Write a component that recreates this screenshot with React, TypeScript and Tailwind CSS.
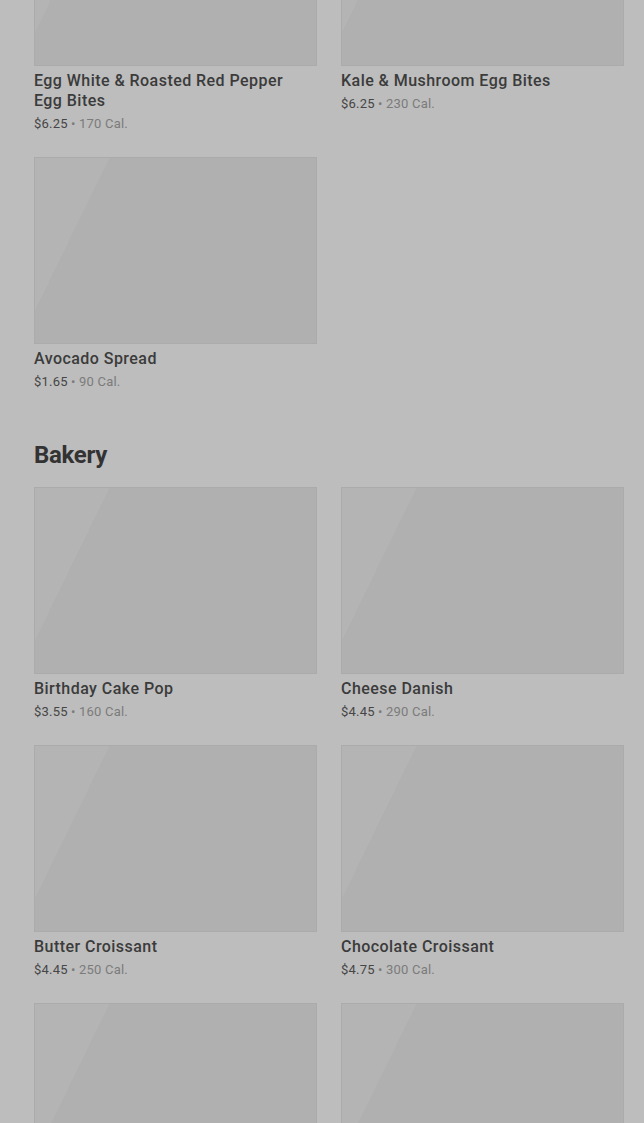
import React from "react";

type Item = { name: string; price: string; cal: string };

const sections: { title?: string; items: Item[] }[] = [
  {
    items: [
      { name: "Egg White & Roasted Red Pepper Egg Bites", price: "$6.25", cal: "170 Cal." },
      { name: "Kale & Mushroom Egg Bites", price: "$6.25", cal: "230 Cal." },
      { name: "Avocado Spread", price: "$1.65", cal: "90 Cal." },
    ],
  },
  {
    title: "Bakery",
    items: [
      { name: "Birthday Cake Pop", price: "$3.55", cal: "160 Cal." },
      { name: "Cheese Danish", price: "$4.45", cal: "290 Cal." },
      { name: "Butter Croissant", price: "$4.45", cal: "250 Cal." },
      { name: "Chocolate Croissant", price: "$4.75", cal: "300 Cal." },
      { name: "Blueberry Muffin", price: "$3.45", cal: "360 Cal." },
      { name: "Banana Nut Bread", price: "$3.95", cal: "420 Cal." },
    ],
  },
];

function Card({ item }: { item: Item }) {
  return (
    <div>
      <div className="h-[187px] border border-[#ababab] bg-[linear-gradient(116deg,#b4b4b4_0,#b4b4b4_20%,#b0b0b0_20%,#b0b0b0_100%)]" />
      <div className="mt-[5px] text-[16px] leading-5 font-medium tracking-[0.45px] text-[#3b3b3b] pr-4">
        {item.name}
      </div>
      <div className="mt-1 text-[13px] leading-[18px] tracking-[0.2px] text-[#464646]">
        {item.price}
        <span className="text-[#7b7b7b]"> • {item.cal}</span>
      </div>
    </div>
  );
}

export default function App() {
  return (
    <div
      className="min-h-screen bg-[#bdbdbd] overflow-hidden"
      style={{ fontFamily: "Roboto, 'Liberation Sans', sans-serif" }}
    >
      <div className="-mt-[121px] pl-[34px] pr-[20px] pb-10">
        {sections.map((s, i) => (
          <section key={i} className={i > 0 ? "mt-[48px]" : ""}>
            {s.title && (
              <h2 className="text-[24px] leading-8 font-bold text-[#333333] mb-4 tracking-[-0.3px]">
                {s.title}
              </h2>
            )}
            <div className="grid grid-cols-2 gap-x-6 gap-y-[24px]">
              {s.items.map((it) => (
                <Card key={it.name} item={it} />
              ))}
            </div>
          </section>
        ))}
      </div>
    </div>
  );
}
